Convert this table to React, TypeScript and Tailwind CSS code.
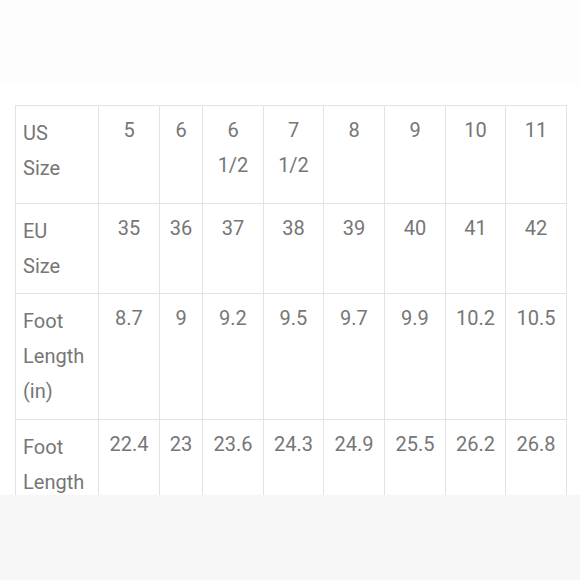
const cols = [83, 61, 43, 61, 60, 61, 61, 60, 61];

const rows: { label: string[]; values: string[][]; height: number }[] = [
  {
    label: ["US", "Size"],
    values: [["5"], ["6"], ["6", "1/2"], ["7", "1/2"], ["8"], ["9"], ["10"], ["11"]],
    height: 98,
  },
  {
    label: ["EU", "Size"],
    values: [["35"], ["36"], ["37"], ["38"], ["39"], ["40"], ["41"], ["42"]],
    height: 90,
  },
  {
    label: ["Foot", "Length", "(in)"],
    values: [["8.7"], ["9"], ["9.2"], ["9.5"], ["9.7"], ["9.9"], ["10.2"], ["10.5"]],
    height: 126,
  },
  {
    label: ["Foot", "Length"],
    values: [["22.4"], ["23"], ["23.6"], ["24.3"], ["24.9"], ["25.5"], ["26.2"], ["26.8"]],
    height: 126,
  },
];

export default function App() {
  return (
    <div
      className="flex h-[580px] w-[580px] flex-col overflow-hidden bg-white"
      style={{ fontFamily: "Roboto, 'Liberation Sans', sans-serif" }}
    >
      {/* faint top band */}
      <div className="h-[85px] shrink-0 bg-[#fdfdfd]" />
      <div className="h-[20px] shrink-0" />

      {/* size chart */}
      <div className="h-[390px] shrink-0 overflow-hidden pl-[15px]">
        <table className="w-[552px] table-fixed border-collapse text-[20px] leading-[35px] text-[#767676]">
          <colgroup>
            {cols.map((w, i) => (
              <col key={i} style={{ width: w }} />
            ))}
          </colgroup>
          <tbody>
            {rows.map((row, r) => (
              <tr key={r} style={{ height: row.height }}>
                <td className="border border-[#e3e3e3] px-[7px] pt-[10px] align-top">
                  {row.label.map((l, i) => (
                    <div key={i}>{l}</div>
                  ))}
                </td>
                {row.values.map((v, c) => (
                  <td key={c} className="border border-[#e3e3e3] pt-[7px] text-center align-top">
                    {v.map((l, i) => (
                      <div key={i}>{l}</div>
                    ))}
                  </td>
                ))}
              </tr>
            ))}
          </tbody>
        </table>
      </div>

      {/* grey footer band */}
      <div className="flex-1 bg-[#f7f7f7]" />
    </div>
  );
}
